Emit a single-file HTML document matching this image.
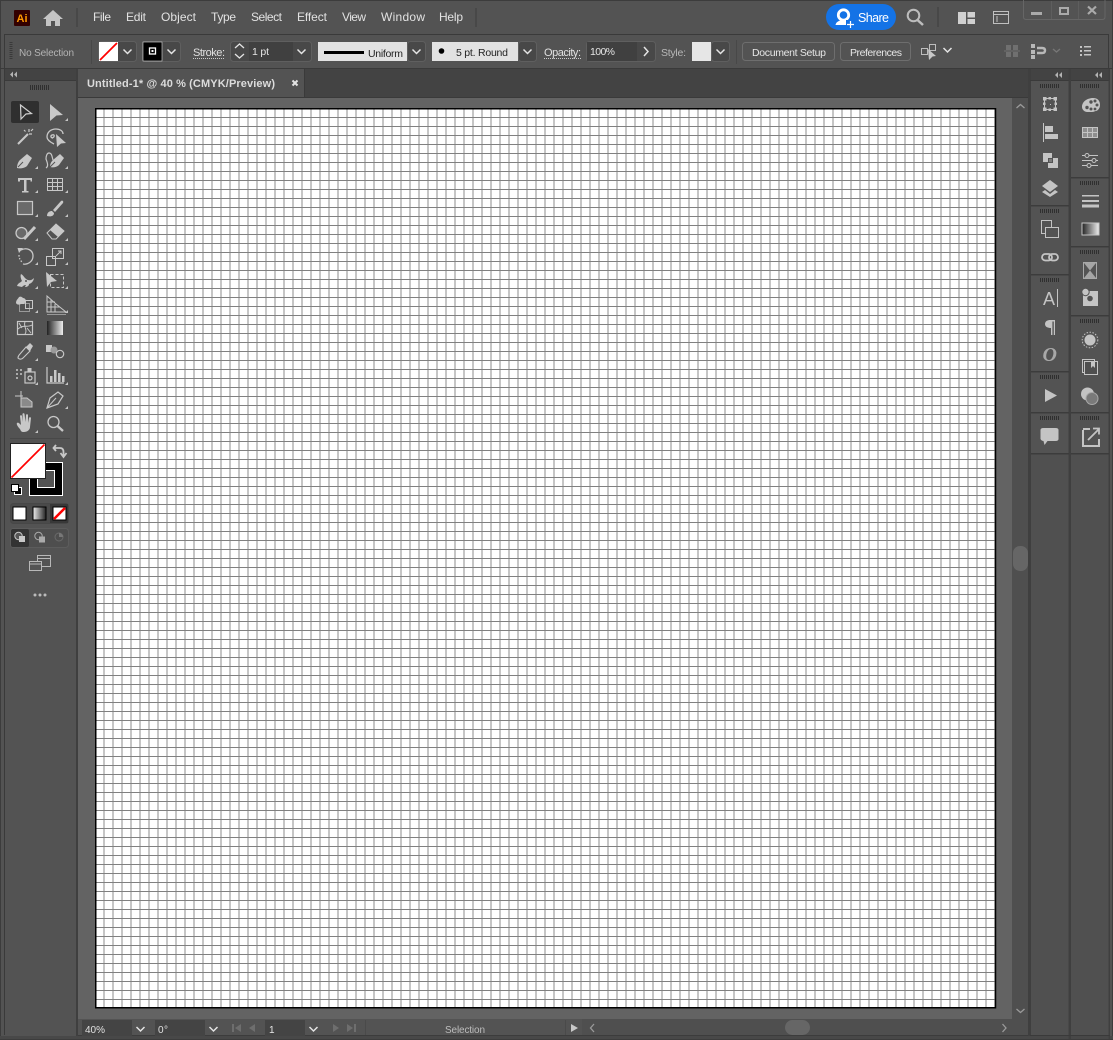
<!DOCTYPE html>
<html><head><meta charset="utf-8"><title>Illustrator</title>
<style>html,body{margin:0;padding:0;background:#535353;width:1113px;height:1040px;overflow:hidden}svg{display:block}text{font-family:"Liberation Sans",sans-serif}</style></head>
<body>
<svg width="1113" height="1040" viewBox="0 0 1113 1040" xmlns="http://www.w3.org/2000/svg">
<defs>
<pattern id="g" patternUnits="userSpaceOnUse" x="103" y="117" width="9" height="9"><rect width="9" height="9" fill="#fff"/><rect width="2" height="9" fill="#c6c6c6"/><rect width="9" height="1" fill="#808080"/></pattern>
<path id="t" d="M3 0V3H0Z" fill="#c4c4c4"/>
<path id="ch" d="M-4 -2L0 2L4 -2" fill="none" stroke="#e4e4e4" stroke-width="1.500"/>
<path id="dc" d="M-3.500 0L-.5 -3V3ZM.5 0L3.500 -3V3Z" fill="#b4b4b4"/>
<pattern id="gr" patternUnits="userSpaceOnUse" width="2" height="6"><rect width="1" height="6" fill="#2f2f2f"/></pattern>
<linearGradient id="lg"><stop offset="0" stop-color="#222"/><stop offset="1" stop-color="#eee"/></linearGradient>
</defs>
<!-- base -->
<rect width="1113" height="1040" fill="#535353"/>
<rect width="1113" height="1" fill="#3c3c3c"/>
<rect x="0" width="1" height="1040" fill="#3c3c3c"/><rect x="1112" width="1" height="1040" fill="#3c3c3c"/>
<rect y="1039" width="1113" height="1" fill="#3c3c3c"/>
<!-- title bar -->
<rect x="14" y="10" width="16" height="16" rx="1" fill="#330000"/>
<text x="16.500" y="22" font-size="11" font-weight="bold" fill="#ff9a00" textLength="11">Ai</text>
<path d="M53 10L63 19H60V26H55V21H51V26H46V19H43Z" fill="#c4c4c4"/>
<rect x="76" y="8" width="2" height="19" fill="#484848"/>
<g font-size="12" fill="#e2e2e2">
<text x="93" y="21" textLength="18">File</text><text x="126" y="21" textLength="20">Edit</text><text x="161" y="21" textLength="35">Object</text><text x="211" y="21" textLength="25">Type</text><text x="251" y="21" textLength="31">Select</text><text x="297" y="21" textLength="30">Effect</text><text x="342" y="21" textLength="24">View</text><text x="381" y="21" textLength="44">Window</text><text x="439" y="21" textLength="24">Help</text>
</g>
<rect x="475" y="8" width="2" height="19" fill="#484848"/>
<!-- share -->
<rect x="826" y="4" width="70" height="26" rx="13" fill="#1473e6"/>
<circle cx="843.500" cy="15" r="5.200" fill="#1473e6" stroke="#fff" stroke-width="2.800"/>
<path d="M835.500 25c.5-3 3-4 5-4.500h6l1 4.500z" fill="#fff"/>
<rect x="846" y="20" width="9" height="9" fill="#1473e6"/>
<path d="M850.500 21v7M847 24.500h7" stroke="#fff" stroke-width="1.200"/>
<text x="858" y="22" font-size="12.500" fill="#fff" textLength="31">Share</text>
<circle cx="913.500" cy="15.500" r="5.800" fill="none" stroke="#bdbdbd" stroke-width="2"/><path d="M917.500 20L923 25" stroke="#bdbdbd" stroke-width="2.500"/>
<rect x="937" y="7" width="2" height="20" fill="#484848"/>
<path d="M958 12h8v12h-8zM967.500 12h7.500v5.500h-7.500zM967.500 19h7.500v5h-7.500z" fill="#d0d0d0"/>
<rect x="993.500" y="11.500" width="15" height="12" fill="none" stroke="#c0c0c0"/><path d="M994 14.500h14" stroke="#c0c0c0"/><path d="M996 17h2M996 19h2M996 21h2" stroke="#c0c0c0"/>
<path d="M1023.500 0V17q0 2.500 3 2.500H1102q3 0 3-2.500V0" fill="none" stroke="#666"/>
<path d="M1051.500 1v18M1078.500 1v18" stroke="#5e5e5e"/>
<rect x="1031" y="12" width="11" height="3" fill="#aaa"/>
<rect x="1060" y="8" width="8" height="6" fill="none" stroke="#aaa" stroke-width="2"/>
<path d="M1088 6.500L1096 14M1096 6.500L1088 14" stroke="#aaa" stroke-width="2.200"/>
<!-- control bar -->
<rect x="4" y="34" width="1105" height="1" fill="#3a3a3a"/>
<rect x="4" y="34" width="1" height="36" fill="#3a3a3a"/><rect x="1108" y="34" width="1" height="36" fill="#3a3a3a"/>
<path d="M9.500 42.500h3M9.500 44.500h3M9.500 46.500h3M9.500 48.500h3M9.500 50.500h3M9.500 52.500h3M9.500 54.500h3M9.500 56.500h3M9.500 58.500h3" stroke="#3a3a3a"/>
<text x="19" y="56" font-size="10" fill="#b4b4b4" textLength="55">No Selection</text>
<rect x="91" y="40" width="1" height="24" fill="#484848"/>
<rect x="98.500" y="41.500" width="38" height="20" rx="3" fill="#484848" stroke="#5f5f5f"/>
<rect x="99" y="42" width="19" height="19" fill="#fff"/><path d="M100 60L117 43" stroke="#f00" stroke-width="1.800"/>
<use href="#ch" x="127.500" y="51.500"/>
<rect x="142.500" y="41.500" width="38" height="20" rx="3" fill="#484848" stroke="#5f5f5f"/>
<rect x="143" y="42" width="19" height="19" fill="#000" stroke="#ddd" stroke-width=".6"/>
<rect x="149.500" y="48" width="6" height="6" fill="none" stroke="#fff" stroke-width="1.300"/><rect x="151.500" y="50" width="2" height="2" fill="#fff"/>
<use href="#ch" x="171.500" y="51.500"/>
<text x="193" y="56" font-size="11" fill="#e0e0e0" textLength="32">Stroke:</text>
<path d="M193 58.500H225" stroke="#ccc" stroke-dasharray="1 1"/>
<rect x="230.500" y="41.500" width="81" height="20" rx="3" fill="#484848" stroke="#5f5f5f"/>
<rect x="249" y="42" width="44" height="19" fill="#404040"/>
<path d="M235 48L239.500 44L244 48M235 54L239.500 58L244 54" fill="none" stroke="#e4e4e4" stroke-width="1.300"/>
<text x="252" y="55" font-size="10.500" fill="#e4e4e4" textLength="17">1 pt</text>
<use href="#ch" x="301.500" y="51.500"/>
<rect x="318" y="42" width="89" height="19" fill="#e2e2e2"/>
<rect x="324" y="51" width="40" height="3" fill="#000"/>
<text x="368" y="57" font-size="10.500" fill="#222" textLength="35">Uniform</text>
<rect x="407.500" y="41.500" width="18" height="20" rx="3" fill="#484848" stroke="#5f5f5f"/>
<use href="#ch" x="416.500" y="51.500"/>
<rect x="432" y="42" width="86" height="19" fill="#e2e2e2"/>
<circle cx="441.500" cy="51" r="2.800" fill="#000"/>
<text x="456" y="56" font-size="10.500" fill="#222" textLength="52">5 pt. Round</text>
<rect x="518.500" y="41.500" width="18" height="20" rx="3" fill="#484848" stroke="#5f5f5f"/>
<use href="#ch" x="527.500" y="51.500"/>
<text x="544" y="56" font-size="11" fill="#e0e0e0" textLength="37">Opacity:</text>
<path d="M544 58.500H581" stroke="#ccc" stroke-dasharray="1 1"/>
<rect x="586.500" y="41.500" width="69" height="20" rx="3" fill="#484848" stroke="#5f5f5f"/>
<rect x="587" y="42" width="50" height="19" fill="#404040"/>
<text x="590" y="55" font-size="10.500" fill="#e4e4e4" textLength="25">100%</text>
<path d="M644 47L648 51.500L644 56" fill="none" stroke="#e4e4e4" stroke-width="1.500"/>
<text x="661" y="56" font-size="10.500" fill="#b8b8b8" textLength="25">Style:</text>
<rect x="692" y="42" width="19" height="19" fill="#e6e6e6"/>
<rect x="711.500" y="41.500" width="18" height="20" rx="3" fill="#484848" stroke="#5f5f5f"/>
<use href="#ch" x="720.500" y="51.500"/>
<rect x="736" y="40" width="1" height="24" fill="#484848"/>
<rect x="742.500" y="42.500" width="92" height="18" rx="3" fill="#535353" stroke="#6e6e6e"/>
<text x="752" y="56" font-size="10.500" fill="#e6e6e6" textLength="74">Document Setup</text>
<rect x="840.500" y="42.500" width="70" height="18" rx="3" fill="#535353" stroke="#6e6e6e"/>
<text x="850" y="56" font-size="10.500" fill="#e6e6e6" textLength="52">Preferences</text>
<g fill="none" stroke="#bdbdbd"><rect x="921.500" y="48.500" width="6" height="6"/><rect x="929.500" y="44.500" width="6" height="6"/></g>
<path d="M928 49L936 56L932.500 56.500L929 60Z" fill="#c8c8c8"/>
<use href="#ch" x="947.500" y="50"/>
<g fill="#707070"><rect x="1006" y="45" width="5" height="5"/><rect x="1013" y="45" width="5" height="5"/><rect x="1006" y="52" width="5" height="5"/><rect x="1013" y="52" width="5" height="5"/><rect x="1004" y="50.500" width="16" height="1"/></g>
<g fill="#b8b8b8"><rect x="1031" y="44" width="4" height="4"/><rect x="1031" y="50" width="4" height="4"/><rect x="1031" y="55" width="4" height="4"/></g>
<path d="M1037 48h5q3 0 3 2.500t-3 2.500h-5" fill="none" stroke="#b8b8b8" stroke-width="2.400"/>
<path d="M1053 49l3.500 3 3.500-3" fill="none" stroke="#777" stroke-width="1.300"/>
<g fill="#c4c4c4"><rect x="1080" y="46" width="2" height="2"/><rect x="1080" y="50" width="2" height="2"/><rect x="1080" y="54" width="2" height="2"/><rect x="1084" y="46" width="7" height="1.500"/><rect x="1084" y="50" width="7" height="1.500"/><rect x="1084" y="54" width="7" height="1.500"/></g>
<!-- tab strip and pasteboard -->
<rect x="78" y="69" width="950" height="29" fill="#434343"/>
<rect x="0" y="68" width="1113" height="1" fill="#3a3a3a"/>
<rect x="78" y="69" width="226" height="28" fill="#535353"/>
<rect x="304" y="69" width="1" height="28" fill="#3a3a3a"/>
<rect x="78" y="97" width="950" height="1" fill="#3a3a3a"/>
<text x="87" y="87" font-size="11" font-weight="bold" fill="#dcdcdc" textLength="188">Untitled-1* @ 40 % (CMYK/Preview)</text>
<path d="M292.500 80.500L297.500 85.500M297.500 80.500L292.500 85.500" stroke="#e4e4e4" stroke-width="2"/>
<rect x="78" y="98" width="934" height="921" fill="#636363"/>
<rect x="95.750" y="108.750" width="899.750" height="899" fill="url(#g)" stroke="#000" stroke-width="1.500"/>
<!-- v scrollbar -->
<rect x="1012" y="98" width="16" height="937" fill="#4f4f4f"/>
<path d="M1016.500 108L1020.500 104.500L1024.500 108M1016.500 1009L1020.500 1012.500L1024.500 1009" fill="none" stroke="#9a9a9a" stroke-width="1.300"/>
<rect x="1013" y="546" width="15" height="25" rx="7" fill="#666"/>
<rect x="1028" y="69" width="3" height="970" fill="#3f3f3f"/>
<!-- status bar -->
<rect x="78" y="1019" width="934" height="16" fill="#535353"/>
<rect x="582" y="1019" width="430" height="16" fill="#4f4f4f"/>
<rect x="78" y="1035" width="950" height="1" fill="#3c3c3c"/>
<rect x="82" y="1020" width="50" height="16" fill="#444"/>
<text x="85" y="1033" font-size="10" fill="#e0e0e0" textLength="20">40%</text>
<use href="#ch" x="140.500" y="1029"/>
<rect x="155" y="1020" width="50" height="16" fill="#444"/>
<text x="158" y="1033" font-size="10" fill="#e0e0e0" textLength="10">0°</text>
<use href="#ch" x="213.500" y="1029"/>
<g fill="#6e6e6e"><rect x="232" y="1024" width="2" height="8"/><path d="M241 1024V1032L235 1028Z"/><path d="M255 1024V1032L249 1028Z"/><path d="M333 1024V1032L339 1028Z"/><path d="M347 1024V1032L353 1028Z"/><rect x="354" y="1024" width="2" height="8"/></g>
<rect x="265" y="1020" width="40" height="16" fill="#444"/>
<text x="269" y="1033" font-size="10" fill="#e8e8e8">1</text>
<use href="#ch" x="313.500" y="1029"/>
<rect x="365" y="1020" width="1" height="15" fill="#4a4a4a"/>
<text x="445" y="1033" font-size="10" fill="#bcbcbc" textLength="40">Selection</text>
<rect x="565" y="1020" width="1" height="15" fill="#4a4a4a"/>
<path d="M571 1024V1032L578 1028Z" fill="#c8c8c8"/>
<path d="M594 1024L590.500 1028L594 1032M1002.500 1024L1006 1028L1002.500 1032" fill="none" stroke="#9a9a9a" stroke-width="1.300"/>
<rect x="785" y="1020" width="25" height="15" rx="7.500" fill="#666"/>
<!-- toolbar -->
<rect x="4" y="69" width="1" height="966" fill="#3a3a3a"/>
<rect x="5" y="69" width="71" height="11" fill="#434343"/>
<rect x="5" y="80" width="71" height="1" fill="#3a3a3a"/>
<rect x="76" y="69" width="2" height="970" fill="#3f3f3f"/>
<rect x="0" y="1036" width="1113" height="3" fill="#484848"/>
<use href="#dc" x="13.500" y="74.500"/>
<rect x="30" y="85" width="20" height="5" fill="url(#gr)"/>
<rect x="11" y="101" width="28" height="22" rx="2" fill="#2f2f2f"/>
<path d="M20.500 105L31.500 113.500L26 114L21 119Z" fill="none" stroke="#d0d0d0" stroke-width="1.200"/>
<path d="M50 104L63 115L56.500 115.500L50 121Z" fill="#c8c8c8"/>
<g fill="none" stroke="#c8c8c8" stroke-width="1.500">
<!-- wand -->
<path d="M18 144L28 134" stroke-width="2"/><path d="M29 129v3M32 134h-3M24 130l1.500 1.500M33 129l-2 2" stroke-width="1.200"/>
<!-- lasso -->
<path d="M54 144c-4-2-7-4-7-7 0-5 4-8 9-8 4 0 7 2 7 5M53 138c-2 0-3-2-1-3 3-1 3 2 0 3z" stroke-width="1.300"/>
<path d="M56 134L66 143L61 143.500L57 147Z" fill="#c8c8c8" stroke="none"/>
<!-- pen -->
<path d="M17 168c0-3 1-6 3-8l7-6 5 4-5 8c-2 2-7 3-10 2z" fill="#c8c8c8" stroke="none"/>
<path d="M18 167l5-5" stroke="#535353" stroke-width="1"/>
<!-- curvature -->
<path d="M46 168c3-2 1-6 0-9 0-3 1-6 3-6 3 0 3 4 4 7" stroke-width="1.200"/>
<path d="M50 167c0-3 1-5 3-7l7-6 4 4-5 7c-2 2-6 3-9 2z" fill="#c8c8c8" stroke="none"/>
<path d="M50 167l5-5" stroke="#535353" stroke-width="1"/>
<!-- type -->
<path d="M18 178h14v3.500h-1.500v-1.500h-4v11h2v1.500h-6.500V191h2V180h-4v1.500H18z" fill="#c8c8c8" stroke="none"/>
<!-- table -->
<rect x="47.500" y="178.500" width="15" height="12" stroke-width="1"/><path d="M47.500 182.500h15M47.500 186.500h15M52.500 178.500v12M57.500 178.500v12" stroke-width="1"/>
<!-- rect -->
<rect x="17.500" y="201.500" width="15" height="13" fill="#6a6a6a" stroke="#c8c8c8" stroke-width="1.200"/>
<!-- brush -->
<path d="M47 216c0-4 3-5 5-5l2 2c0 3-3 4-7 3zM53 210l8-9c1-1 3 0 2 2l-8 9z" fill="#c8c8c8" stroke="none"/>
<!-- shaper -->
<circle cx="21.500" cy="233" r="5.500" fill="#6a6a6a" stroke-width="1.300"/><path d="M24 239L35 227" stroke-width="3"/>
<!-- eraser -->
<path d="M47 233L56 224L64 231L56 239H52Z" fill="#535353" stroke-width="1"/><path d="M50 230L56 224L64 231L58 237Z" fill="#c8c8c8" stroke="none"/>
<!-- rotate -->
<path d="M21 250c6-3 12 0 12 6s-6 9-10 8" stroke-width="1.300"/><path d="M19 255c0 3 1 5 3 7" stroke-dasharray="1.500 1.500" stroke-width="1.300"/><path d="M17.500 248L23 248L19 253Z" fill="#c8c8c8" stroke="none"/>
<!-- scale -->
<rect x="46.500" y="256.500" width="9" height="9" stroke-width="1"/><rect x="52.500" y="248.500" width="11" height="10" stroke-width="1"/><path d="M56 256L61 251M58 251h3v3" stroke-width="1"/>
<!-- puppet -->
<path d="M17 286c1-3 3-3 5-5-1-2-2-5-1-7 2 1 3 3 4 4 3 3 6 3 9 0-.5 3-2 5-5 6 0 2-2 3-4 3l1-2c-2 0-3 1-4 2z" fill="#c8c8c8" stroke="none"/>
<circle cx="26" cy="281" r="1" fill="#535353" stroke="none"/>
<!-- free transform -->
<rect x="50.500" y="274.500" width="13" height="13" stroke-width="1" stroke-dasharray="3 2"/><path d="M46 272L57 281L51 282L47 287Z" fill="#c8c8c8" stroke="none"/>
<!-- shape builder -->
<rect x="19.500" y="303.500" width="10" height="8" stroke-width="1" stroke="#999"/><rect x="25.500" y="300.500" width="7" height="8" stroke-width="1"/><path d="M16 303c0-3 2-4 3-6 2-1 3 0 4 1 2 0 3 2 3 3l-2 3h-3c-2 1-4 1-5-1z" fill="#c8c8c8" stroke="none"/>
<!-- perspective -->
<path d="M47 312V296L56 304L66 312ZM47 302H55M51 300V312M55 304V312M47 307H60" stroke-width="1"/><path d="M47 314.500H66" stroke-width="1" stroke="#999"/>
<!-- mesh -->
<rect x="17.500" y="321.500" width="15" height="13" stroke-width="1.200"/><path d="M18 329c5-5 9-1 14-4M25 322c-2 4 3 8 0 12M19 323l3 5M31 333l-4-5" stroke-width="1"/>
<!-- gradient -->
<rect x="47" y="321" width="16" height="14" fill="url(#lg)" stroke="none"/>
<!-- eyedropper -->
<path d="M18 358c0-2 1-3 2-4l6-7 4 4-7 7c-1 1-3 2-5 0z" stroke-width="1.100"/><path d="M26 347l4-4 3 3-3 5z" fill="#c8c8c8" stroke="none"/>
<!-- blend -->
<rect x="46" y="345" width="6" height="7" fill="#c8c8c8" stroke="none"/><circle cx="54" cy="350" r="3.500" fill="#9a9a9a" stroke="none"/><circle cx="60" cy="354" r="3.700" stroke-width="1.200"/>
<!-- symbol sprayer -->
<path d="M16 370h2M20 370h2M16 374h2M20 374h2M16 378h2" stroke-width="1.500"/>
<rect x="25" y="372" width="10" height="11" stroke-width="1.200"/><rect x="27.500" y="368" width="4" height="3.500" fill="#c8c8c8" stroke="none"/><circle cx="30" cy="378" r="2" stroke-width="1.200"/>
<!-- graph -->
<path d="M47 367V383H64" stroke-width="1.200"/><rect x="50" y="376" width="2.500" height="6" fill="#c8c8c8" stroke="none"/><rect x="54" y="370" width="2.500" height="12" fill="#c8c8c8" stroke="none"/><rect x="58" y="373" width="2.500" height="9" fill="#c8c8c8" stroke="none"/><rect x="62" y="376" width="2.500" height="6" fill="#c8c8c8" stroke="none"/>
<!-- artboard -->
<path d="M15 396H23M21 391V399" stroke-width="1"/><path d="M21 398H27L32 402V407H21Z" fill="#8a8a8a" stroke-width="1"/>
<!-- slice/knife -->
<path d="M47 408L50 398L58 392L63 396L58 404Z" stroke-width="1.200"/><path d="M47 408L56 398" stroke-width="1"/>
<!-- hand -->
<path d="M20 429c-2-2-4-5-3-6 1-1 2 0 4 2l-1-9c0-1 2-1 2 0l1 6-.5-8c0-1 2-1 2 0l1 8 .5-7c0-1 2-1 2 0l0 8 1-5c0-1 2-1 2 0l-1 9c0 3-3 5-6 5s-3-1-4-3z" fill="#c8c8c8" stroke="none"/>
<!-- zoom -->
<circle cx="53.500" cy="422" r="5.500" stroke-width="1.300"/><path d="M57.500 426L63 431" stroke-width="2.300"/>
</g>
<!-- flyout marks -->
<g>
<use href="#t" x="65" y="118"/>
<use href="#t" x="35" y="166"/><use href="#t" x="65" y="166"/>
<use href="#t" x="35" y="190"/><use href="#t" x="65" y="190"/>
<use href="#t" x="35" y="214"/><use href="#t" x="65" y="214"/>
<use href="#t" x="35" y="238"/><use href="#t" x="65" y="238"/>
<use href="#t" x="35" y="262"/><use href="#t" x="65" y="262"/>
<use href="#t" x="35" y="286"/><use href="#t" x="65" y="286"/>
<use href="#t" x="35" y="310"/><use href="#t" x="65" y="310"/>
<use href="#t" x="35" y="358"/>
<use href="#t" x="35" y="382"/><use href="#t" x="65" y="382"/>
<use href="#t" x="65" y="406"/>
<use href="#t" x="35" y="430"/>
</g>
<rect x="10" y="438" width="60" height="1" fill="#484848"/>
<!-- stroke/fill big -->
<rect x="29.500" y="462.500" width="33" height="33" fill="#000" stroke="#fff"/>
<rect x="37.500" y="470.500" width="17" height="17" fill="#535353" stroke="#fff"/>
<rect x="10.500" y="443.500" width="35" height="35" fill="#fff" stroke="#222"/>
<path d="M11.500 477.500L44.500 444.500" stroke="#f00" stroke-width="1.700"/>
<path d="M56 445L53.500 448L56 451M54 448H60Q63.500 448 63.500 452V456M60.500 453L63.500 457L66.500 453" fill="none" stroke="#c8c8c8" stroke-width="1.800"/>
<rect x="14.500" y="487.500" width="7" height="7" fill="#000" stroke="#fff"/>
<rect x="11.500" y="484.500" width="7" height="7" fill="#fff" stroke="#000"/>
<!-- color mode -->
<rect x="10.500" y="503.500" width="58" height="20" rx="3" fill="#4a4a4a" stroke="#474747"/>
<rect x="50" y="504" width="18" height="19" fill="#383838"/>
<rect x="13" y="507" width="13" height="13" fill="#fff" stroke="#000"/>
<rect x="33" y="507" width="13" height="13" fill="url(#lg)" stroke="#000" transform="rotate(180 39.500 513.500)"/>
<rect x="53" y="507" width="13" height="13" fill="#fff" stroke="#000"/><path d="M54 519L65 508" stroke="#f00" stroke-width="2.500"/>
<!-- draw modes -->
<rect x="10.500" y="528.500" width="58" height="19" rx="3" fill="#4e4e4e" stroke="#5c5c5c"/>
<rect x="11" y="529" width="18" height="18" rx="2" fill="#333"/>
<circle cx="18.500" cy="536" r="3.700" fill="#555" stroke="#c8c8c8"/><rect x="19" y="536" width="6" height="6" fill="#c8c8c8"/>
<circle cx="38.500" cy="536" r="3.700" fill="none" stroke="#aaa"/><rect x="39" y="536.500" width="6" height="6" fill="#aaa"/>
<circle cx="59" cy="537" r="4" fill="none" stroke="#6a6a6a"/><path d="M59 533a4 4 0 0 1 4 4h-4z" fill="#777"/>
<!-- screen mode -->
<g fill="none" stroke="#b8b8b8"><rect x="37.500" y="555.500" width="13" height="11" fill="#535353"/><rect x="29.500" y="561.500" width="12" height="9" fill="#535353"/><path d="M37.500 558.500h13M29.500 564h12"/></g>
<circle cx="35" cy="595" r="1.500" fill="#bbb"/><circle cx="40" cy="595" r="1.500" fill="#bbb"/><circle cx="45" cy="595" r="1.500" fill="#bbb"/>
<!-- right panels -->
<rect x="1031" y="69" width="78" height="11" fill="#434343"/>
<use href="#dc" x="1058.500" y="75"/><use href="#dc" x="1098.500" y="75"/>
<rect x="1031" y="80" width="38" height="955" fill="#535353"/><rect x="1071" y="80" width="38" height="955" fill="#535353"/>
<rect x="1030" y="80" width="80" height="1" fill="#3a3a3a"/>
<rect x="1068.500" y="69" width="2.500" height="970" fill="#3f3f3f"/>
<rect x="1108.500" y="69" width="1.500" height="970" fill="#3f3f3f"/>
<g fill="#3c3c3c">
<rect x="1031" y="205" width="38" height="1.500"/><rect x="1031" y="274" width="38" height="1.500"/><rect x="1031" y="371" width="38" height="1.500"/><rect x="1031" y="412" width="38" height="1.500"/><rect x="1031" y="453" width="38" height="1.500"/>
<rect x="1071" y="177" width="38" height="1.500"/><rect x="1071" y="246" width="38" height="1.500"/><rect x="1071" y="315" width="38" height="1.500"/><rect x="1071" y="412" width="38" height="1.500"/><rect x="1071" y="453" width="38" height="1.500"/>
</g>
<rect x="1031" y="454.500" width="37.500" height="580.500" fill="#505050"/><rect x="1071" y="454.500" width="37.500" height="580.500" fill="#505050"/>
<rect x="1030" y="1035" width="80" height="1" fill="#3a3a3a"/>
<g>
<rect x="1040" y="84" width="20" height="4" fill="url(#gr)"/><rect x="1040" y="209" width="20" height="4" fill="url(#gr)"/><rect x="1040" y="278" width="20" height="4" fill="url(#gr)"/><rect x="1040" y="375" width="20" height="4" fill="url(#gr)"/><rect x="1040" y="416" width="20" height="4" fill="url(#gr)"/>
<rect x="1080" y="84" width="20" height="4" fill="url(#gr)"/><rect x="1080" y="181" width="20" height="4" fill="url(#gr)"/><rect x="1080" y="250" width="20" height="4" fill="url(#gr)"/><rect x="1080" y="319" width="20" height="4" fill="url(#gr)"/><rect x="1080" y="416" width="20" height="4" fill="url(#gr)"/>
</g>
<g fill="#c4c4c4" stroke="none">
<!-- artboards -->
<rect x="1044.500" y="98.500" width="11" height="11" fill="none" stroke="#c4c4c4"/>
<path d="M1043 97h3.500v3.500h-3.500zM1053.500 97h3.500v3.500h-3.500zM1043 107.500h3.500v3.500h-3.500zM1053.500 107.500h3.500v3.500h-3.500zM1048.500 97h2.500v2.500h-2.500zM1048.500 108.500h2.500v2.500h-2.500zM1043 102.500h2.500v2.500h-2.500zM1054.500 102.500h2.500v2.500h-2.500z"/><rect x="1050" y="104" width="1" height="1"/>
<!-- align -->
<rect x="1043" y="123" width="1" height="19"/><rect x="1045" y="126" width="8" height="6"/><rect x="1045" y="134" width="13" height="5"/>
<!-- pathfinder -->
<rect x="1043" y="153" width="9" height="9"/><rect x="1048" y="158" width="10" height="10"/><rect x="1048.500" y="158.500" width="4" height="4" fill="#7a7a7a" stroke="#535353"/>
<!-- layers -->
<path d="M1050 180L1058 186L1050 192L1042 186Z"/><path d="M1045 190L1050 194L1055 190L1058 192L1050 197L1042 192Z"/>
<!-- transform-ish -->
<g fill="#535353" stroke="#c4c4c4"><rect x="1041.500" y="220.500" width="10" height="13"/><rect x="1045.500" y="227.500" width="13" height="10"/></g>
<!-- links -->
<g fill="none" stroke="#c4c4c4" stroke-width="1.800"><rect x="1042" y="254" width="10" height="6.500" rx="3.250"/><rect x="1049" y="254" width="9" height="6.500" rx="3.250"/></g>
<!-- char -->
<text x="1043" y="305" font-size="18" fill="#c4c4c4">A</text><rect x="1057" y="289" width="1" height="18"/>
<!-- para -->
<path d="M1050 320h5v15h-1.200V321.500h-1.400V335H1051V328c-3 0-6-1-6-4s3-4 5-4z"/>
<!-- opentype -->
<text x="1042.500" y="361" font-size="20" font-style="italic" font-weight="bold" fill="#a8a8a8" style="font-family:'Liberation Serif',serif">O</text>
<!-- play -->
<path d="M1045 389L1057 395.500L1045 402Z"/>
<!-- comment -->
<path d="M1044 428h12q3 0 3 2v9q0 2-3 2h-8l-3 4-1-4q-2 0-3-2v-9q0-2 3-2z" transform="translate(-.5,0)"/>
<!-- palette -->
<path d="M1082 107c0-6 6-9 11-9s7 3 7 7-3 6-4 6-2 1-4 1-3 0-5 0-5-2-5-5z"/>
<g fill="#535353"><circle cx="1091" cy="102" r="1.700"/><circle cx="1095" cy="101" r="1.500"/><circle cx="1097" cy="105" r="1.500"/><circle cx="1087" cy="107.500" r="1.700"/><circle cx="1091" cy="109" r="1.500"/><circle cx="1095" cy="109" r="1.400"/></g>
<!-- swatches -->
<rect x="1082" y="127" width="16" height="11" fill="#8e8e8e"/><path d="M1082.500 127.500h15v10h-15zM1082.500 132.500h15M1087.500 127.500v10M1092.500 127.500v10" fill="none" stroke="#c4c4c4"/>
<!-- adjust -->
<g fill="none" stroke="#c4c4c4"><path d="M1082 155.500h16M1082 160.500h16M1082 165.500h16"/><circle cx="1087" cy="155.500" r="2" fill="#535353"/><circle cx="1094" cy="160.500" r="2" fill="#535353"/><circle cx="1089" cy="165.500" r="2" fill="#535353"/></g>
<!-- stroke -->
<rect x="1082" y="195" width="17" height="1.500"/><rect x="1082" y="200" width="17" height="2"/><rect x="1082" y="204.500" width="17" height="3"/>
<!-- gradient -->
<rect x="1082" y="223" width="17" height="12" fill="url(#lg)" stroke="#c4c4c4"/>
<!-- transparency -->
<rect x="1083.500" y="262.500" width="13" height="16" fill="none" stroke="#a8a8a8"/>
<path d="M1084 263h12L1090 270.500ZM1084 278H1096L1090 270.500Z" fill="#a4a4a4"/>
<!-- symbols -->
<rect x="1083" y="291" width="15" height="15"/><circle cx="1085.500" cy="292" r="3.700" stroke="#535353" stroke-width="1"/><circle cx="1090" cy="298.500" r="2.800" fill="#535353"/>
<!-- appearance -->
<circle cx="1090" cy="340" r="5.500"/><circle cx="1090" cy="340" r="7.800" fill="none" stroke="#c4c4c4" stroke-dasharray="1.500 1.500"/>
<!-- graphic styles -->
<g fill="#4f4f4f" stroke="#c4c4c4"><rect x="1082.500" y="359.500" width="12" height="13"/><rect x="1084.500" y="361.500" width="13" height="13"/></g><path d="M1091 361h4v7l-2-2-2 2z"/>
<!-- appearance circles -->
<circle cx="1087.500" cy="394" r="6.500"/><circle cx="1092" cy="398.500" r="6" fill="#7a7a7a" stroke="#a8a8a8"/>
<!-- export -->
<path d="M1083 430v16h16v-7M1090 429h-7" fill="none" stroke="#c4c4c4" stroke-width="2"/><path d="M1088 440L1099 429M1093 428.500h6v6" fill="none" stroke="#c4c4c4" stroke-width="1.800"/>
</g>
</svg>
</body></html>
